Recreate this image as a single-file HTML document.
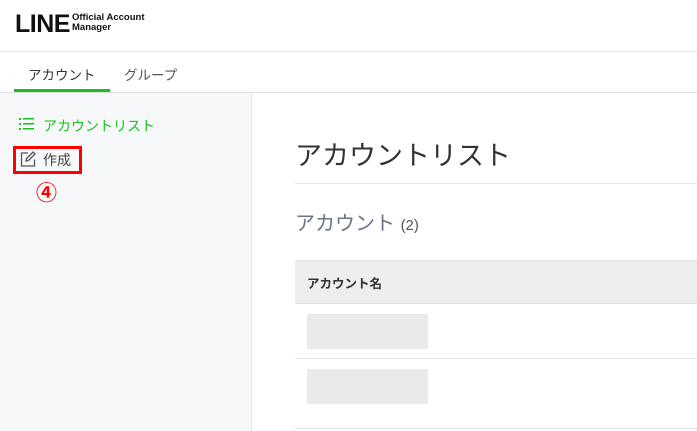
<!DOCTYPE html><html><head><meta charset="utf-8"><style>
*{margin:0;padding:0;box-sizing:border-box}
body{width:697px;height:431px;overflow:hidden;background:#fff;font-family:"Liberation Sans","Noto Sans CJK JP",sans-serif;position:relative;color:#333}
.a{position:absolute}
</style></head><body>
<div class="a" style="left:0;top:0;width:697px;height:52px;border-bottom:1px solid #e6e6e6"></div>
<div class="a" style="left:15px;top:10px;font-weight:900;font-size:25px;letter-spacing:-0.5px;color:#111;line-height:28px">LINE</div>
<div class="a" style="left:72px;top:13px;font-weight:bold;font-size:9.5px;line-height:10px;color:#111">Official Account<br>Manager</div>
<div class="a" style="left:0;top:92px;width:697px;border-top:1px solid #ddd"></div>
<div class="a" style="left:28px;top:64px;font-size:13.5px;color:#333">アカウント</div>
<div class="a" style="left:124px;top:64px;font-size:13.5px;color:#555">グループ</div>
<div class="a" style="left:14px;top:89px;width:96px;height:3px;background:#19c01f"></div>
<div class="a" style="left:0;top:93px;width:252px;height:338px;background:#f7f8fa;border-right:1px solid #e3e5e8"></div>
<svg class="a" style="left:19px;top:117px" width="16" height="14"><g fill="#19c01f"><rect x="0" y="1" width="2" height="2"/><rect x="0" y="6" width="2" height="2"/><rect x="0" y="11" width="2" height="2"/><rect x="4" y="1" width="11" height="1.5"/><rect x="4" y="6" width="11" height="1.5"/><rect x="4" y="11" width="11" height="1.5"/></g></svg>
<div class="a" style="left:43px;top:116px;font-size:14px;color:#19c01f">アカウントリスト</div>
<div class="a" style="left:13px;top:146px;width:69px;height:28px;border:3px solid #f00"></div>
<svg class="a" style="left:20px;top:151px" width="16" height="16" fill="none" stroke="#555" stroke-width="1.3"><path d="M8 2H1.5v13h13V8.5"/><path d="M6 10l.5-2.5L13 1l2 2-6.5 6.5z"/></svg>
<div class="a" style="left:43px;top:150px;font-size:14px;color:#444">作成</div>
<div class="a" style="left:36px;top:177px;font-size:21px;color:#f00;font-weight:bold">④</div>
<div class="a" style="left:295px;top:134px;font-size:27px;color:#333">アカウントリスト</div>
<div class="a" style="left:295px;top:183px;width:402px;border-top:1px solid #e3e5e8"></div>
<div class="a" style="left:295px;top:207px;font-size:20px;color:#6b7385">アカウント <span style="font-size:15px;color:#555">(2)</span></div>
<div class="a" style="left:295px;top:260px;width:402px;height:44px;background:#eceef0;border-top:1px solid #dfe1e5;border-bottom:1px solid #dfe1e5"></div>
<div class="a" style="left:307px;top:273px;font-size:12.5px;font-weight:bold;color:#333">アカウント名</div>
<div class="a" style="left:307px;top:314px;width:121px;height:35px;background:#eaeaea"></div>
<div class="a" style="left:295px;top:358px;width:402px;border-top:1px solid #e3e5e8"></div>
<div class="a" style="left:307px;top:369px;width:121px;height:35px;background:#eaeaea"></div>
<div class="a" style="left:295px;top:428px;width:402px;border-top:1px solid #e3e5e8"></div>
</body></html>
